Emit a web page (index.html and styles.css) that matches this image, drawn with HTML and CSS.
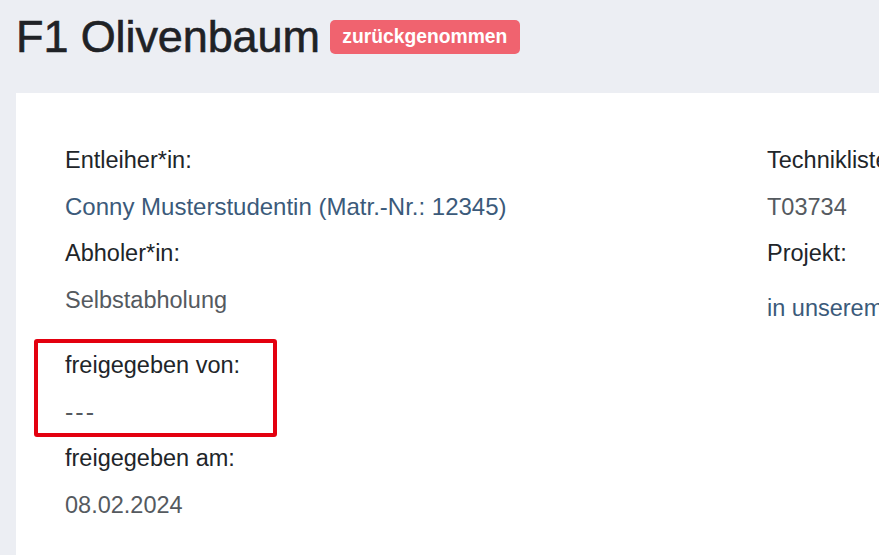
FILE: index.html
```html
<!DOCTYPE html>
<html lang="de">
<head>
<meta charset="utf-8">
<title>F1 Olivenbaum</title>
<link rel="stylesheet" href="styles.css">
</head>
<body>
<header class="page-header">
  <h1 class="title">F1 Olivenbaum</h1>
  <span class="badge">zurückgenommen</span>
</header>
<main class="card">
  <section class="col col-left">
    <div class="group">
      <div class="label">Entleiher*in:</div>
      <div class="value"><a class="link link-wide" href="#">Conny Musterstudentin (Matr.-Nr.: 12345)</a></div>
      <div class="label">Abholer*in:</div>
      <div class="value">Selbstabholung</div>
    </div>
    <div class="group group-second">
      <div class="highlight"></div>
      <div class="label">freigegeben von:</div>
      <div class="value value-dashes">---</div>
      <div class="label">freigegeben am:</div>
      <div class="value">08.02.2024</div>
    </div>
  </section>
  <section class="col col-right">
    <div class="label">Technikliste:</div>
    <div class="value">T03734</div>
    <div class="label">Projekt:</div>
    <div class="value value-para"><a class="link" href="#">in unserem Projektordner</a></div>
  </section>
</main>
</body>
</html>
```
FILE: styles.css
```css
html, body {
  margin: 0;
  padding: 0;
}
body {
  background: #eceef3;
  font-family: "Liberation Sans", Arial, sans-serif;
  color: #212529;
  overflow: hidden;
  width: 879px;
  height: 555px;
}
.page-header {
  display: flex;
  align-items: center;
  gap: 10px;
  padding: 10px 0 0 16px;
  height: 54px;
  margin-bottom: 29px;
}
.title {
  margin: 0;
  font-size: 45px;
  font-weight: 500;
  line-height: 54px;
  color: #1f2226;
  letter-spacing: -0.1px;
  -webkit-text-stroke: 0.6px #1f2226;
}
.badge {
  display: inline-block;
  background: #f0636f;
  color: #fff;
  font-weight: 700;
  font-size: 19.3px;
  line-height: 20px;
  padding: 7px 12.5px;
  border-radius: 5px;
}
.card {
  background: #fff;
  margin-left: 16px;
  height: 462px;
  overflow: hidden;
  display: grid;
  grid-template-columns: 702px 1fr;
  padding: 44px 0 0 49px;
  box-sizing: border-box;
}
.col {
  font-size: 23.5px;
  min-width: 0;
}
.label,
.value {
  line-height: 46.5px;
  white-space: nowrap;
}
.label {
  color: #212529;
}
.value {
  color: #555a5f;
}
.value-dashes {
  letter-spacing: 2px;
  font-size: 25px;
}
.link {
  color: #3b5a7a;
  text-decoration: none;
}
.link-wide {
  font-size: 24px;
}
.group {
  position: relative;
}
.group-second {
  margin-top: 19px;
}
.highlight {
  position: absolute;
  left: -31px;
  top: -3px;
  width: 243px;
  height: 98px;
  border: 4px solid #e3000f;
  border-radius: 3px;
  box-sizing: border-box;
}
.value-para {
  margin-top: 8px;
}
```
